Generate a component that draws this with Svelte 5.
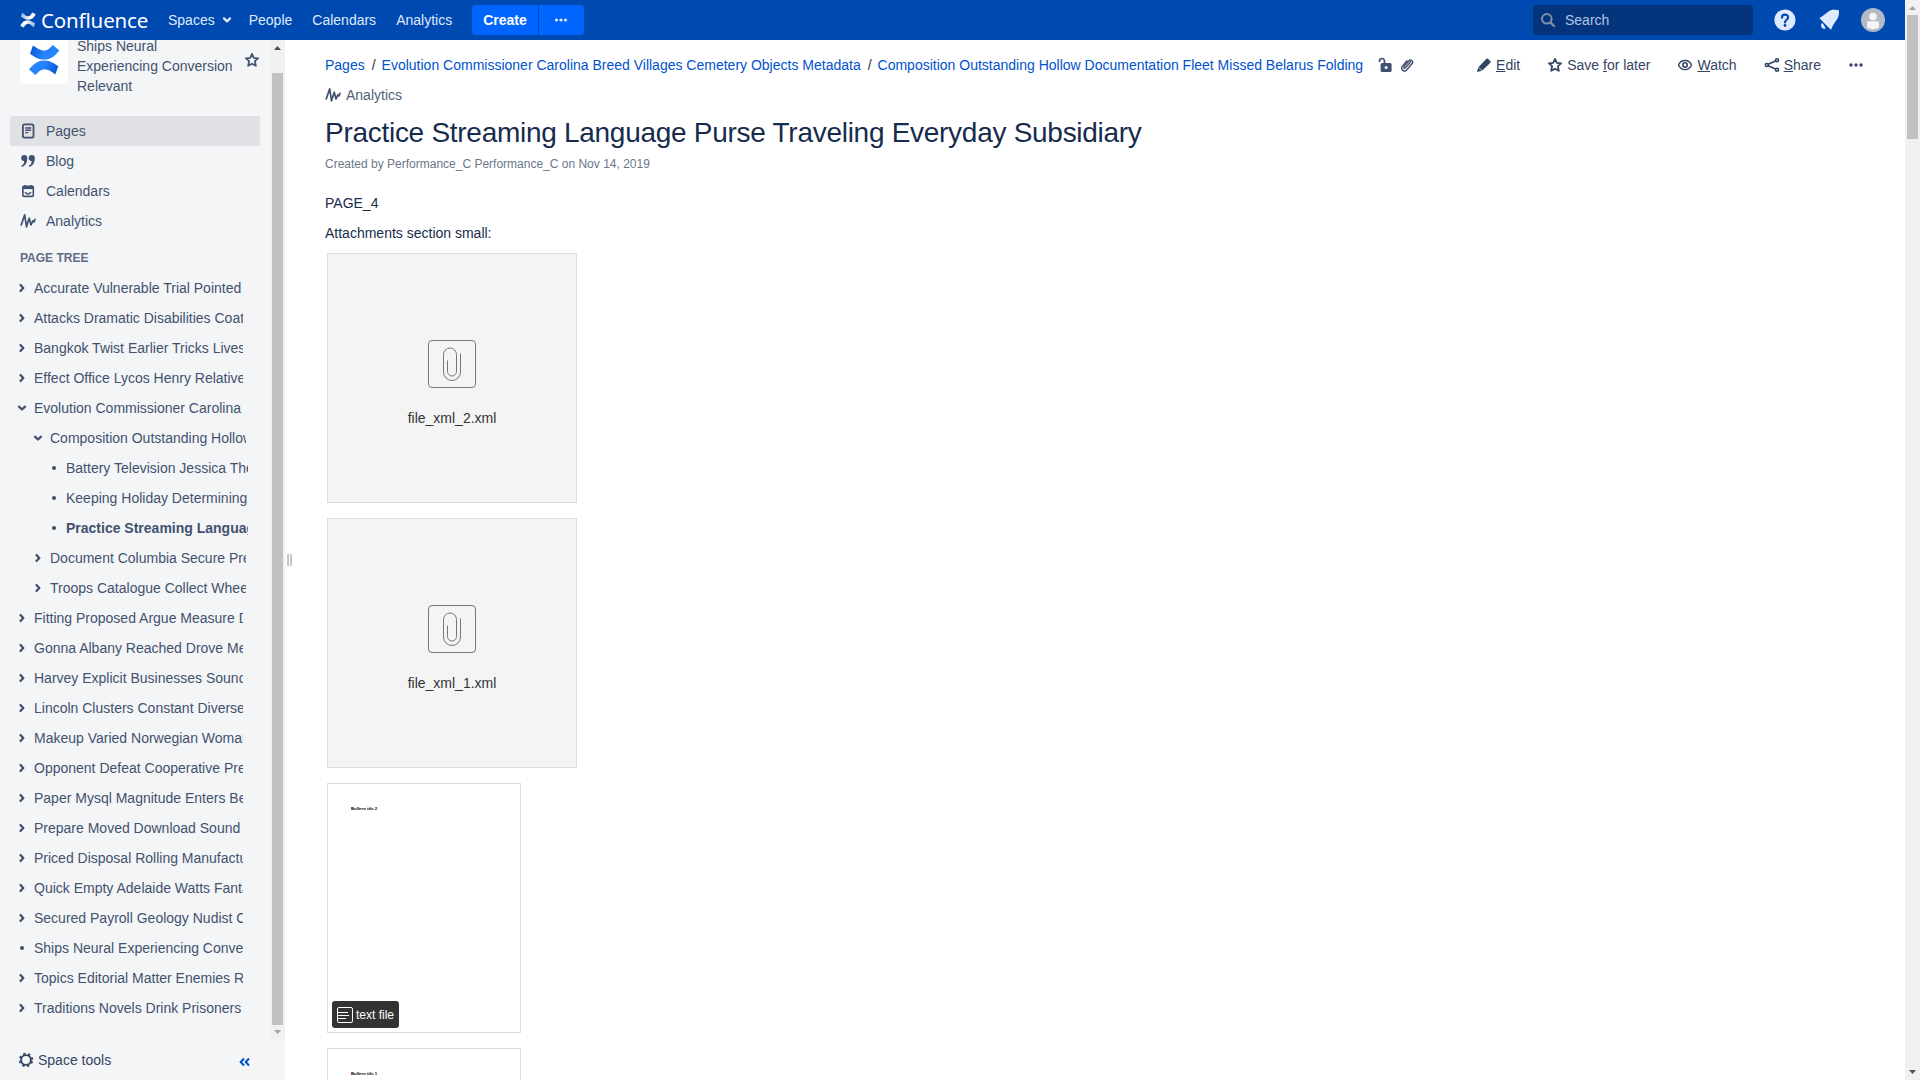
<script>
  const nav = ['People', 'Calendars', 'Analytics'];
  const sections = [
    { label: 'Pages', icon: 'page', active: true },
    { label: 'Blog', icon: 'quote' },
    { label: 'Calendars', icon: 'calendar' },
    { label: 'Analytics', icon: 'pulse' }
  ];
  const tree = [
    { t: 'Accurate Vulnerable Trial Pointed', k: 'closed', d: 0 },
    { t: 'Attacks Dramatic Disabilities Coat', k: 'closed', d: 0 },
    { t: 'Bangkok Twist Earlier Tricks Lives', k: 'closed', d: 0 },
    { t: 'Effect Office Lycos Henry Relative', k: 'closed', d: 0 },
    { t: 'Evolution Commissioner Carolina', k: 'open', d: 0 },
    { t: 'Composition Outstanding Hollow', k: 'open', d: 1 },
    { t: 'Battery Television Jessica Theme', k: 'leaf', d: 2 },
    { t: 'Keeping Holiday Determining', k: 'leaf', d: 2 },
    { t: 'Practice Streaming Language', k: 'leaf', d: 2, current: true },
    { t: 'Document Columbia Secure Preview', k: 'closed', d: 1 },
    { t: 'Troops Catalogue Collect Wheels', k: 'closed', d: 1 },
    { t: 'Fitting Proposed Argue Measure Die', k: 'closed', d: 0 },
    { t: 'Gonna Albany Reached Drove Men', k: 'closed', d: 0 },
    { t: 'Harvey Explicit Businesses Sound', k: 'closed', d: 0 },
    { t: 'Lincoln Clusters Constant Diverse', k: 'closed', d: 0 },
    { t: 'Makeup Varied Norwegian Woman', k: 'closed', d: 0 },
    { t: 'Opponent Defeat Cooperative Press', k: 'closed', d: 0 },
    { t: 'Paper Mysql Magnitude Enters Bed', k: 'closed', d: 0 },
    { t: 'Prepare Moved Download Sound', k: 'closed', d: 0 },
    { t: 'Priced Disposal Rolling Manufacture', k: 'closed', d: 0 },
    { t: 'Quick Empty Adelaide Watts Fantasy', k: 'closed', d: 0 },
    { t: 'Secured Payroll Geology Nudist City', k: 'closed', d: 0 },
    { t: 'Ships Neural Experiencing Conversion', k: 'leaf', d: 0 },
    { t: 'Topics Editorial Matter Enemies Run', k: 'closed', d: 0 },
    { t: 'Traditions Novels Drink Prisoners', k: 'closed', d: 0 }
  ];
  const crumbs = [
    'Pages',
    'Evolution Commissioner Carolina Breed Villages Cemetery Objects Metadata',
    'Composition Outstanding Hollow Documentation Fleet Missed Belarus Folding'
  ];
</script>

{#snippet pulse()}
  <svg class="i16" viewBox="0 0 16 16"><path d="M1.200 12 L4.700 1.900 L6.500 13.800 L9.200 5.200 L11 12 L12.800 7.800 L14 9 L15 6.400" fill="none" stroke="currentColor" stroke-width="1.700" stroke-linejoin="round" stroke-linecap="round" /></svg>
{/snippet}

{#snippet star()}
  <svg class="i16" viewBox="0 0 16 16"><path d="M8 1.900 L9.800 5.800 L14.100 6.300 L10.900 9.200 L11.800 13.800 L8 11.700 L4.200 13.800 L5.100 9.200 L1.900 6.300 L6.200 5.800 Z" fill="none" stroke="currentColor" stroke-width="1.800" stroke-linejoin="round" /></svg>
{/snippet}

<div class="window">
  <div class="app">
    <header>
      <a class="brand" href="#home">
        <svg width="16" height="16" viewBox="0 0 32 32">
          <defs>
            <linearGradient id="w1" x1="0" y1="0" x2="1" y2="0"><stop offset="0" stop-color="#fff" stop-opacity=".55" /><stop offset=".6" stop-color="#fff" /></linearGradient>
            <linearGradient id="w2" x1="1" y1="0" x2="0" y2="0"><stop offset="0" stop-color="#fff" stop-opacity=".55" /><stop offset=".6" stop-color="#fff" /></linearGradient>
          </defs>
          <path d="M4.600 1.500 C8 4 11.500 8.500 16 8.500 C20.500 8.500 22.500 4 24.600 .8 L31.500 4.500 C28 11 24 15.500 17.500 15.500 C11 15.500 5 11.500 1.500 8.800 Z" fill="url(#w1)" />
          <path d="M27.400 30.500 C24 28 20.500 23.500 16 23.500 C11.500 23.500 9.500 28 7.400 31.200 L.5 27.500 C4 21 8 16.500 14.500 16.500 C21 16.500 27 20.500 30.500 23.200 Z" fill="url(#w2)" />
        </svg>
        <span>Confluence</span>
      </a>
      <nav>
        <a href="#spaces">Spaces<svg width="10" height="8" viewBox="0 0 10 8"><path d="M2 2.400 L5 5.400 L8 2.400" fill="none" stroke="currentColor" stroke-width="2.200" stroke-linecap="round" stroke-linejoin="round" /></svg></a>
        {#each nav as n}<a href="#nav">{n}</a>{/each}
      </nav>
      <button class="create">Create</button>
      <button class="more" aria-label="More"><svg width="14" height="4" viewBox="0 0 14 4" fill="#deebff"><circle cx="2.500" cy="2" r="1.600" /><circle cx="7" cy="2" r="1.600" /><circle cx="11.500" cy="2" r="1.600" /></svg></button>
      <div class="search">
        <svg width="16" height="16" viewBox="0 0 16 16" fill="none" stroke="#7f8fac"><circle cx="6.800" cy="6.800" r="4.800" stroke-width="2" /><path d="M10.500 10.500 L14 14" stroke-width="2.400" stroke-linecap="round" /></svg>
        <span>Search</span>
      </div>
      <svg class="help" width="22" height="22" viewBox="0 0 22 22"><circle cx="11" cy="11" r="10.600" fill="#deebff" /><path d="M7.900 8.700 C7.900 4.500 14.100 4.600 14.100 8.400 C14.100 10.700 11 10.800 11 13.400" fill="none" stroke="#0049b0" stroke-width="2.200" stroke-linecap="round" /><circle cx="11" cy="16.500" r="1.400" fill="#0049b0" /></svg>
      <svg class="bell" width="22" height="22" viewBox="0 0 22 22" fill="#deebff"><path d="M1.400 9 C6 7 9.500 2 13.500 1 C16 .5 18 1.300 20.700 .9 C21.600 5 20.600 8.500 17.500 12.500 C15.500 15 14.500 17.500 13 20.800 L7.500 15.600 Z" /><path d="M4.600 14 A2.800 2.800 0 0 0 7.700 19.200 Z" /></svg>
      <svg class="avatar" width="24" height="24" viewBox="0 0 24 24"><circle cx="12" cy="12" r="12" fill="#b3bac5" /><circle cx="12" cy="8.500" r="3.800" fill="#f4f5f7" /><path d="M6 14.500 Q6 13.200 7.500 13.200 H16.500 Q18 13.200 18 14.500 V19.500 Q15.500 21.200 12 21.200 Q8.500 21.200 6 19.500 Z" fill="#f4f5f7" /></svg>
    </header>

    <div class="columns">
      <aside>
        <div class="side-scroll">
          <div class="side-content">
            <div class="space">
              <div class="space-logo">
                <svg width="32" height="32" viewBox="0 0 32 32">
                  <defs>
                    <linearGradient id="b1" x1="0" y1="0" x2="1" y2=".3"><stop offset="0" stop-color="#0052cc" /><stop offset=".65" stop-color="#2684ff" /></linearGradient>
                    <linearGradient id="b2" x1="1" y1="1" x2="0" y2=".7"><stop offset="0" stop-color="#0052cc" /><stop offset=".65" stop-color="#2684ff" /></linearGradient>
                  </defs>
                  <path d="M5 1.600 C9 4.300 13 7.300 17 6.500 C20.500 5.800 22.500 3.500 24.800 1 L31.300 6.400 C27.500 11.500 23 15.300 16.500 15.600 C10 15.900 6 12.500 2 9.800 Z" fill="url(#b1)" />
                  <path d="M27.300 30.400 C23.300 27.700 19.300 24.700 15.300 25.500 C11.800 26.200 9.800 28.500 7.500 31 L1 25.600 C4.800 20.500 9.300 16.700 15.800 16.400 C22.300 16.100 26.300 19.500 30.300 22.200 Z" fill="url(#b2)" />
                </svg>
              </div>
              <div class="space-name">Ships Neural Experiencing Conversion Relevant</div>
              <span class="fav">{@render star()}</span>
            </div>

            <div class="sections">
              {#each sections as s}
                <a href="#section" class:active={s.active}>
                  {#if s.icon === 'page'}
                    <svg class="i16" viewBox="0 0 16 16" fill="none" stroke="currentColor"><rect x="2.900" y="1.400" width="10.600" height="13.200" rx="1.600" stroke-width="1.800" /><path d="M5.200 5 H11.200 M5.200 7.300 H11.200 M5.200 9.600 H8.300" stroke-width="1.400" /></svg>
                  {:else if s.icon === 'quote'}
                    <svg class="i16" viewBox="0 0 16 16" fill="currentColor"><path d="M1.200 5 A3 3 0 0 1 7.300 5.200 C7.300 10 5.200 13 2 13.800 C1.200 13.900 1.100 12.900 1.800 12.500 C3.400 11.500 4.100 10 4.100 8 A3 3 0 0 1 1.200 5 Z" /><path d="M8.700 5 A3 3 0 0 1 14.800 5.200 C14.800 10 12.700 13 9.500 13.800 C8.700 13.900 8.600 12.900 9.300 12.500 C10.900 11.500 11.600 10 11.600 8 A3 3 0 0 1 8.700 5 Z" /></svg>
                  {:else if s.icon === 'calendar'}
                    <svg class="i16" viewBox="0 0 16 16" fill="none" stroke="currentColor"><rect x="2.900" y="3.200" width="10.400" height="10.200" rx="1" stroke-width="1.600" /><path d="M2.500 4.600 H13.500" stroke-width="3" /><path d="M4.800 2 V4 M11.200 2 V4" stroke-width="1.600" /><path d="M5 9.300 Q8 12.800 11 9.300" stroke-width="1.500" /></svg>
                  {:else}
                    {@render pulse()}
                  {/if}
                  <span>{s.label}</span>
                </a>
              {/each}
            </div>

            <h5>PAGE TREE</h5>
            <ul>
              {#each tree as n}
                <li class="d{n.d}" class:current={n.current}>
                  <svg width="12" height="12" viewBox="0 0 12 12" fill="none" stroke="currentColor" stroke-width="2.300" stroke-linecap="round" stroke-linejoin="round">
                    {#if n.k === 'closed'}<path d="M4.500 3 L7.300 6 L4.500 9" />
                    {:else if n.k === 'open'}<path d="M3 4.700 L6 7.500 L9 4.700" />
                    {:else}<circle cx="6" cy="6" r="2.100" fill="currentColor" stroke="none" />{/if}
                  </svg>
                  <span>{n.t}</span>
                </li>
              {/each}
            </ul>
          </div>
          <div class="bar inner">
            <svg width="15" height="15" viewBox="0 0 15 15"><path d="M4 10 H11 L7.500 6 Z" fill="#505050" /></svg>
            <i></i>
            <svg width="15" height="15" viewBox="0 0 15 15"><path d="M4 5 H11 L7.500 9 Z" fill="#a3a3a3" /></svg>
          </div>
        </div>
        <div class="tools">
          <svg class="i16" viewBox="0 0 16 16" fill="none" stroke="currentColor"><circle cx="8" cy="8" r="4.900" stroke-width="1.900" /><circle cx="8" cy="8" r="6.300" stroke-width="1.800" stroke-dasharray="2.300 2.648" stroke-dashoffset="-1.300" /></svg>
          <span>Space tools</span>
          <svg class="collapse" width="12" height="10" viewBox="0 0 12 10"><path d="M5 1.500 L1.700 5 L5 8.500 M10 1.500 L6.700 5 L10 8.500" fill="none" stroke="#0052cc" stroke-width="2" /></svg>
        </div>
      </aside>
      <div class="grip"><i></i><i></i></div>

      <main>
        <div class="topline">
          <div class="crumbs">
            {#each crumbs as c, i}
              {#if i > 0}<span class="sep">/</span>{/if}<a href="#crumb">{c}</a>
            {/each}
            <svg class="lock" width="14" height="16" viewBox="0 0 14 16"><path d="M1.500 5 V4 A2.500 2.500 0 0 1 6.500 4 V7" fill="none" stroke="currentColor" stroke-width="1.700" /><rect x="2.600" y="6" width="11" height="9" rx="1.500" fill="currentColor" /><circle cx="8.100" cy="10.400" r="1.500" fill="#fff" /></svg>
            <svg class="clip" width="14" height="16" viewBox="0 0 14 16" fill="none" stroke="currentColor" stroke-width="1.400" stroke-linecap="round"><path d="M10.600 4.800 L5.500 10.900 C4.500 12 3.200 10.900 4 9.800 L8.700 4 C10.700 1.600 13.900 4.100 12.100 6.500 L6.900 12.800 C4.300 15.700 .2 12.600 2.300 9.400 L6.900 3.800" /></svg>
          </div>
          <div class="actions">
            <a href="#edit"><svg class="i16" viewBox="0 0 16 16" fill="currentColor"><path d="M1 14.900 L2.200 10.300 L5.800 13.800 Z" /><path d="M2.600 9.900 L10.400 1.800 Q11.200 1 12 1.800 L14.400 4.200 Q15.200 5 14.400 5.800 L6.300 13.600 Z" /></svg><span><u>E</u>dit</span></a>
            <a href="#save">{@render star()}<span>Save <u>f</u>or later</span></a>
            <a href="#watch"><svg class="i16" viewBox="0 0 16 16" fill="none" stroke="currentColor"><path d="M1.500 8 C4 1.900 12 1.900 14.500 8 C12 14.100 4 14.100 1.500 8 Z" stroke-width="1.400" /><circle cx="8" cy="8" r="2.200" stroke-width="1.600" /></svg><span><u>W</u>atch</span></a>
            <a href="#share"><svg class="i16" viewBox="0 0 16 16" fill="none" stroke="currentColor" stroke-width="1.600"><circle cx="2.800" cy="8" r="1.500" /><circle cx="13" cy="3.300" r="1.500" /><circle cx="13" cy="12.800" r="1.500" /><path d="M4.200 7.300 L11.600 4 M4.200 8.700 L11.600 12.100" /></svg><span><u>S</u>hare</span></a>
            <a href="#more" aria-label="More actions"><svg class="i16" viewBox="0 0 16 16" fill="currentColor"><circle cx="3" cy="8" r="1.700" /><circle cx="8" cy="8" r="1.700" /><circle cx="13" cy="8" r="1.700" /></svg></a>
          </div>
        </div>
        <div class="analytics">{@render pulse()}<span>Analytics</span></div>
        <h1>Practice Streaming Language Purse Traveling Everyday Subsidiary</h1>
        <p class="meta">Created by Performance_C Performance_C on Nov 14, 2019</p>
        <p>PAGE_4</p>
        <p>Attachments section small:</p>

        <div class="files">
          {#each ['file_xml_2.xml', 'file_xml_1.xml'] as f}
            <div class="file">
              <svg width="48" height="48" viewBox="0 0 48 48" fill="none" stroke="#777" stroke-width="1"><rect x=".5" y=".5" width="47" height="47" rx="3.500" /><path d="M19.500 20.500 V31.500 A4.500 4.500 0 0 0 28.500 31.500 V14.500 A6.500 6.500 0 0 0 15.500 14.500 V32 A8.500 8.500 0 0 0 32.500 32 V13.500" /></svg>
              <span>{f}</span>
            </div>
          {/each}
          {#each ['Bullern ttfs 2', 'Bullern ttfs 1'] as t}
            <div class="file doc">
              <small>{t}</small>
              <div class="badge">
                <svg width="16" height="16" viewBox="0 0 16 16" fill="none" stroke="#fff"><rect x=".5" y=".5" width="15" height="15" rx="1.500" /><path d="M1 5.500 H11 M1 8.500 H12 M1 11.500 H9" /></svg>
                <span>text file</span>
              </div>
            </div>
          {/each}
        </div>
      </main>
    </div>
  </div>
  <div class="bar outer">
    <svg width="15" height="15" viewBox="0 0 15 15"><path d="M4 10 H11 L7.500 6 Z" fill="#a3a3a3" /></svg>
    <i></i>
    <svg class="end" width="15" height="15" viewBox="0 0 15 15"><path d="M4 5 H11 L7.500 9 Z" fill="#505050" /></svg>
  </div>
</div>

<style>
  :global(body) { margin: 0; overflow: hidden; }
  * { box-sizing: border-box; }
  .window { display: flex; width: 1920px; height: 1080px; overflow: hidden; background: #fff; font: 14px/20px 'Liberation Sans', Arial, sans-serif; color: #172b4d; }
  .app { flex: 1; min-width: 0; display: flex; flex-direction: column; }
  a { color: inherit; text-decoration: none; }
  svg { display: block; flex: none; }
  .i16 { width: 16px; height: 16px; }
  p, h1, h5, ul { margin: 0; padding: 0; }

  header { flex: none; height: 40px; display: flex; align-items: center; background: #0049b0; color: #deebff; padding: 0 20px; }
  .brand { display: flex; align-items: center; width: 148px; color: #fff; }
  .brand span { margin-left: 5px; font: 20.500px/28px 'Noto Sans', sans-serif; letter-spacing: -.150px; }
  nav { display: flex; gap: 20px; width: 304px; }
  nav a { display: flex; align-items: center; white-space: nowrap; }
  nav a svg { margin: 0 -3px 0 7px; }
  header button { height: 30px; border: 0; padding: 0; background: #0065ff; color: #fff; font: bold 14px 'Liberation Sans', sans-serif; display: flex; align-items: center; justify-content: center; }
  .create { width: 66px; border-radius: 3px 0 0 3px; }
  header .more { width: 45px; margin-left: 1px; padding-right: 2px; border-radius: 0 3px 3px 0; }
  .search { margin-left: auto; width: 220px; height: 30px; border-radius: 3px; background: #04347b; color: #b0c4e6; display: flex; align-items: center; gap: 9px; padding-left: 7px; }
  .help { margin-left: 21px; }
  .bell { margin-left: 22px; }
  .avatar { margin-left: 21px; }

  .columns { flex: 1; min-height: 0; display: flex; }
  aside { width: 285px; flex: none; display: flex; flex-direction: column; background: #f4f5f7; color: #42526e; }
  .side-scroll { height: 1000px; display: flex; overflow: hidden; }
  .side-content { flex: 1; min-width: 0; margin-top: -4px; }
  .space { height: 80px; display: flex; padding-left: 20px; }
  .space-logo { width: 48px; height: 48px; border-radius: 3px; background: #fff; display: flex; align-items: center; justify-content: center; }
  .space-name { flex: none; width: 167px; padding-left: 9px; }
  .fav { margin: 16px 0 0 9px; }
  .sections { padding: 0 10px; }
  .sections a { height: 30px; display: flex; align-items: center; gap: 10px; padding-left: 10px; border-radius: 3px; }
  .sections a.active { background: #dfe1e5; }
  h5 { font: bold 12px/20px 'Liberation Sans', sans-serif; color: #5e6c84; padding: 12px 0 0 20px; margin-bottom: 5px; }
  ul { list-style: none; }
  li { height: 30px; display: flex; align-items: center; gap: 6px; padding-left: 16px; width: 243px; overflow: hidden; white-space: nowrap; }
  li.d1 { padding-left: 32px; width: 246px; }
  li.d2 { padding-left: 48px; width: 248px; }
  li.current { font-weight: bold; }
  .tools { height: 40px; display: flex; align-items: center; padding-left: 18px; gap: 4px; color: #344563; }
  .collapse { margin-left: 124px; margin-top: 4px; }

  .bar { width: 15px; flex: none; display: flex; flex-direction: column; align-items: center; background: #f1f1f1; }
  .bar i { width: 11px; background: #c1c1c1; }
  .inner i { height: 952px; margin-top: 18px; }
  .outer i { height: 124px; }
  .end { margin-top: auto; }

  .grip { width: 10px; display: flex; align-items: flex-start; gap: 1px; padding: 514px 0 0 2px; }
  .grip i { width: 2px; height: 12px; background: #c1c7d0; }

  main { flex: 1; min-width: 0; padding: 15px 41px 0 30px; }
  .topline { display: flex; justify-content: space-between; height: 20px; white-space: nowrap; }
  .crumbs { display: flex; color: #42526e; }
  .crumbs a { color: #0052cc; }
  .sep { margin: 0 6px 0 7px; color: #333; }
  .lock { margin: 2px 0 0 15px; }
  .clip { margin: 2px 0 0 8px; }
  .actions { display: flex; color: #344563; gap: 27px; }
  .actions a { display: flex; align-items: center; gap: 4px; }
  .analytics { display: flex; align-items: center; gap: 5px; margin-top: 10px; color: #505f79; }
  .analytics svg { color: #42526e; }
  h1 { margin-top: 11px; font-size: 28px; line-height: 34px; font-weight: normal; letter-spacing: -.28px; }
  .meta { margin: 4px 0 19px; font-size: 12px; color: #6b778c; }
  p + p { margin-top: 10px; }
  .meta + p { margin-top: 0; }
  .files { margin: 10px 0 0 2px; display: flex; flex-direction: column; gap: 15px; height: 827px; overflow: hidden; }
  .file { width: 250px; height: 250px; flex: none; border: 1px solid #ddd; background: #f4f4f4; display: flex; flex-direction: column; align-items: center; padding-top: 86px; color: #333; }
  .file > span { margin-top: 20px; }
  .doc { width: 194px; background: #fff; align-items: flex-start; padding: 22px 4px 4px; }
  .doc small { margin-left: 19px; font: bold 4.300px/6px 'Liberation Sans', sans-serif; color: #000; }
  .badge { margin-top: auto; height: 27px; width: 67px; border-radius: 3px; background: #333; color: #fff; font-size: 12px; display: flex; align-items: center; gap: 3px; padding-left: 5px; white-space: nowrap; }
</style>
